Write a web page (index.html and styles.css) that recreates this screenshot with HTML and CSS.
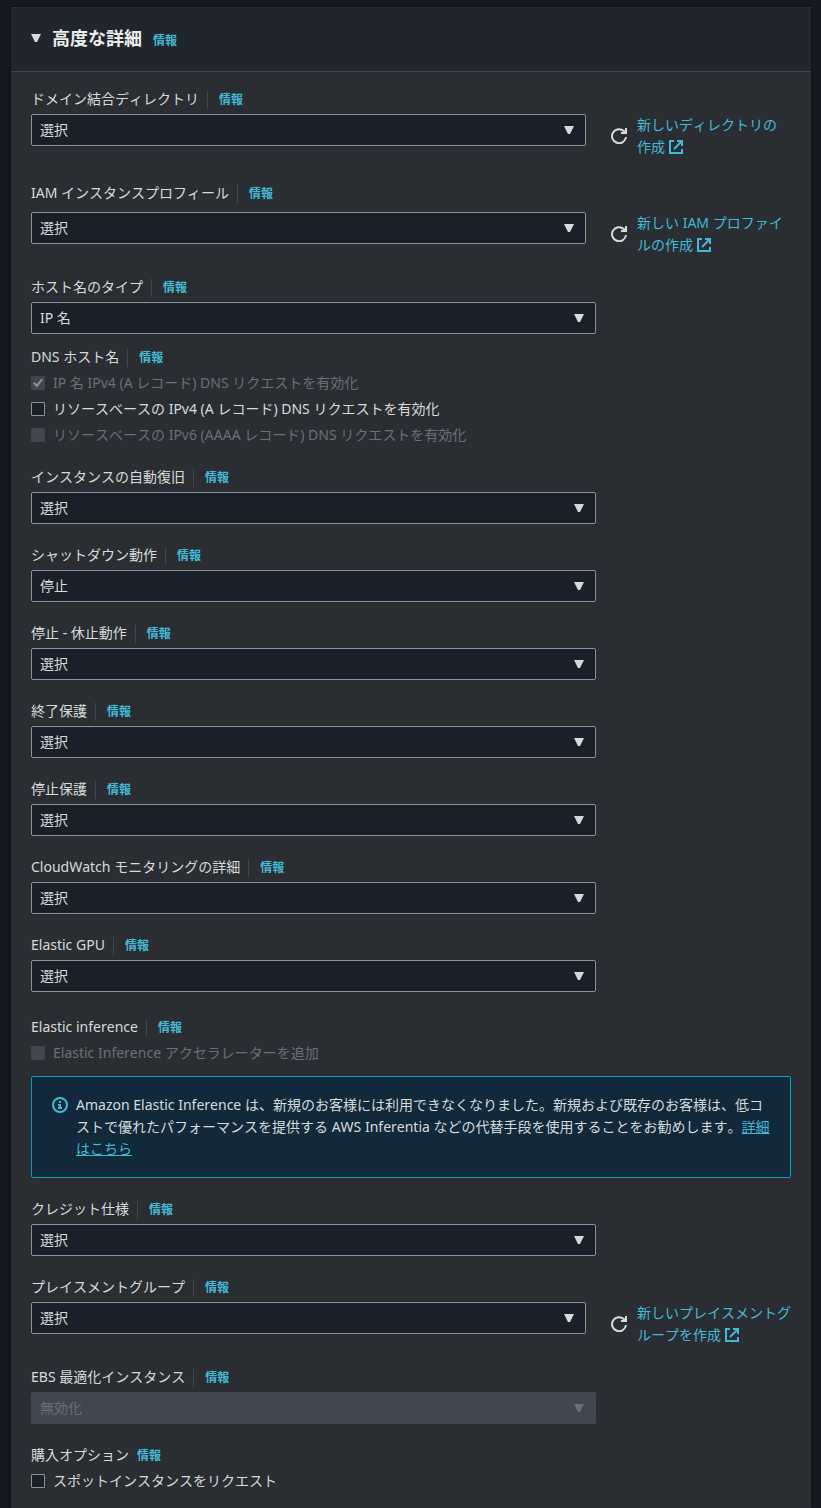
FILE: index.html
```html
<!DOCTYPE html>
<html lang="ja">

<head>
    <meta charset="UTF-8">
    <meta name="viewport" content="width=device-width, initial-scale=1.0">
    <title>高度な詳細</title>

    <link rel="stylesheet" href="styles.css">
</head>

<body>
    <!-- shared icons -->
    <svg class="sprite" aria-hidden="true">
        <symbol id="icon-refresh" viewBox="0 0 16 16">
            <path d="M15 9a7 7 0 1 1-2.200-6L15 5" />
            <path d="M15 0v5H10" />
        </symbol>
        <symbol id="icon-external" viewBox="0 0 14 14">
            <path d="M5 1H1v12h12V9" />
            <path d="M8 1h5v5M13 1 5 9" />
        </symbol>
        <symbol id="icon-info" viewBox="0 0 16 16">
            <circle cx="8" cy="8" r="7" />
            <path d="M8 4v2M6 8h2v3M6 11h4" />
        </symbol>
    </svg>

    <section class="panel">
        <header class="panel-header">
            <button type="button" class="toggle" aria-label="折りたたむ" aria-expanded="true"></button>
            <div class="title">
                <h2>高度な詳細</h2>
                <a href="#" class="info plain">情報</a>
            </div>
        </header>

        <form class="panel-body">
            <div class="field gap-large">
                <div class="label-row">
                    <label for="domain">ドメイン結合ディレクトリ</label>
                    <a href="#" class="info">情報</a>
                </div>
                <div class="control with-link">
                    <div class="select"><select id="domain"><option>選択</option></select></div>
                    <div class="side">
                        <button type="button" class="refresh" aria-label="更新"><svg><use href="#icon-refresh" /></svg></button>
                        <a href="#" class="create">新しいディレクトリの<span class="last">作成 <svg><use href="#icon-external" /></svg></span></a>
                    </div>
                </div>
            </div>

            <div class="field spaced">
                <div class="label-row">
                    <label for="iam">IAM インスタンスプロフィール</label>
                    <a href="#" class="info">情報</a>
                </div>
                <div class="control with-link">
                    <div class="select"><select id="iam"><option>選択</option></select></div>
                    <div class="side">
                        <button type="button" class="refresh" aria-label="更新"><svg><use href="#icon-refresh" /></svg></button>
                        <a href="#" class="create">新しい IAM プロファイルの<span class="last">作成 <svg><use href="#icon-external" /></svg></span></a>
                    </div>
                </div>
            </div>

            <div class="field gap-small">
                <div class="label-row">
                    <label for="hostname">ホスト名のタイプ</label>
                    <a href="#" class="info">情報</a>
                </div>
                <div class="control">
                    <div class="select"><select id="hostname"><option>IP 名</option></select></div>
                </div>
            </div>

            <div class="field" role="group" aria-labelledby="dns">
                <div class="label-row">
                    <span id="dns">DNS ホスト名</span>
                    <a href="#" class="info">情報</a>
                </div>
                <label class="check"><input type="checkbox" checked disabled><span>IP 名 IPv4 (A レコード) DNS リクエストを有効化</span></label>
                <label class="check"><input type="checkbox"><span>リソースベースの IPv4 (A レコード) DNS リクエストを有効化</span></label>
                <label class="check"><input type="checkbox" disabled><span>リソースベースの IPv6 (AAAA レコード) DNS リクエストを有効化</span></label>
            </div>

            <div class="field">
                <div class="label-row">
                    <label for="recovery">インスタンスの自動復旧</label>
                    <a href="#" class="info">情報</a>
                </div>
                <div class="control">
                    <div class="select"><select id="recovery"><option>選択</option></select></div>
                </div>
            </div>

            <div class="field">
                <div class="label-row">
                    <label for="shutdown">シャットダウン動作</label>
                    <a href="#" class="info">情報</a>
                </div>
                <div class="control">
                    <div class="select"><select id="shutdown"><option>停止</option></select></div>
                </div>
            </div>

            <div class="field">
                <div class="label-row">
                    <label for="hibernate">停止 - 休止動作</label>
                    <a href="#" class="info">情報</a>
                </div>
                <div class="control">
                    <div class="select"><select id="hibernate"><option>選択</option></select></div>
                </div>
            </div>

            <div class="field">
                <div class="label-row">
                    <label for="termination">終了保護</label>
                    <a href="#" class="info">情報</a>
                </div>
                <div class="control">
                    <div class="select"><select id="termination"><option>選択</option></select></div>
                </div>
            </div>

            <div class="field">
                <div class="label-row">
                    <label for="stop">停止保護</label>
                    <a href="#" class="info">情報</a>
                </div>
                <div class="control">
                    <div class="select"><select id="stop"><option>選択</option></select></div>
                </div>
            </div>

            <div class="field">
                <div class="label-row">
                    <label for="cloudwatch">CloudWatch モニタリングの詳細</label>
                    <a href="#" class="info">情報</a>
                </div>
                <div class="control">
                    <div class="select"><select id="cloudwatch"><option>選択</option></select></div>
                </div>
            </div>

            <div class="field gap-large">
                <div class="label-row">
                    <label for="gpu">Elastic GPU</label>
                    <a href="#" class="info">情報</a>
                </div>
                <div class="control">
                    <div class="select"><select id="gpu"><option>選択</option></select></div>
                </div>
            </div>

            <div class="field" role="group" aria-labelledby="inference">
                <div class="label-row">
                    <span id="inference">Elastic inference</span>
                    <a href="#" class="info">情報</a>
                </div>
                <label class="check"><input type="checkbox" disabled><span>Elastic Inference アクセラレーターを追加</span></label>
                <div class="alert">
                    <svg><use href="#icon-info" /></svg>
                    <p>Amazon Elastic Inference は、新規のお客様には利用できなくなりました。新規および既存のお客様は、低コストで優れたパフォーマンスを提供する AWS Inferentia などの代替手段を使用することをお勧めします。<a href="#">詳細はこちら</a></p>
                </div>
            </div>

            <div class="field">
                <div class="label-row">
                    <label for="credit">クレジット仕様</label>
                    <a href="#" class="info">情報</a>
                </div>
                <div class="control">
                    <div class="select"><select id="credit"><option>選択</option></select></div>
                </div>
            </div>

            <div class="field">
                <div class="label-row">
                    <label for="placement">プレイスメントグループ</label>
                    <a href="#" class="info">情報</a>
                </div>
                <div class="control with-link">
                    <div class="select"><select id="placement"><option>選択</option></select></div>
                    <div class="side">
                        <button type="button" class="refresh" aria-label="更新"><svg><use href="#icon-refresh" /></svg></button>
                        <a href="#" class="create">新しいプレイスメントグループを<span class="last">作成 <svg><use href="#icon-external" /></svg></span></a>
                    </div>
                </div>
            </div>

            <div class="field">
                <div class="label-row">
                    <label for="ebs">EBS 最適化インスタンス</label>
                    <a href="#" class="info">情報</a>
                </div>
                <div class="control">
                    <div class="select disabled"><select id="ebs" disabled><option>無効化</option></select></div>
                </div>
            </div>

            <div class="field" role="group" aria-labelledby="purchase">
                <div class="label-row">
                    <span id="purchase">購入オプション</span>
                    <a href="#" class="info plain">情報</a>
                </div>
                <label class="check"><input type="checkbox"><span>スポットインスタンスをリクエスト</span></label>
            </div>
        </form>
    </section>
</body>

</html>
```
FILE: styles.css
```css
* {
    box-sizing: border-box;
}

body {
    margin: 0;
    padding: 7px 10px 0 11px;
    background-color: #16191f;
    color: #d5dbdb;
    font-family: "Noto Sans", "Noto Sans CJK JP", sans-serif;
    font-size: 14px;
    font-kerning: none;
    line-height: 22px;
}

a {
    color: #44b9d6;
    text-decoration: none;
}

svg {
    fill: none;
    stroke: currentColor;
    stroke-width: 2;
}

.sprite {
    display: none;
}

/* panel */

.panel {
    background-color: #2a2e33;
    box-shadow: 0 0 2px rgba(0, 0, 0, 0.6);
}

.panel-header {
    display: flex;
    align-items: center;
    gap: 11px;
    padding: 16px 20px 19px;
    background-color: #21252c;
    border-top: 1px solid #2a2e33;
    border-bottom: 1px solid #414750;
}

.title {
    display: flex;
    align-items: baseline;
}

.title h2 {
    margin: 0 3px 0 0;
    color: #eaeded;
    font-size: 18px;
    line-height: 28px;
}

.toggle {
    width: 10px;
    height: 8px;
    padding: 0;
    border: none;
    background-color: #d5dbdb;
    clip-path: polygon(0 0, 100% 0, 60% 100%, 40% 100%);
}

.panel-body {
    padding: 16px 20px;
}

/* fields */

.field {
    margin-bottom: 20px;
}

.field:last-child {
    margin-bottom: 0;
}

.gap-small {
    margin-bottom: 12px;
}

.gap-large {
    margin-bottom: 24px;
}

.label-row {
    display: flex;
    align-items: baseline;
    height: 22px;
    margin-bottom: 4px;
}

.spaced .label-row {
    margin-bottom: 8px;
}

.info {
    margin-left: 8px;
    padding-left: 11px;
    border-left: 1px solid #414750;
    font-size: 12px;
    font-weight: bold;
    line-height: 18px;
}

.info.plain {
    padding-left: 0;
    border-left: none;
}

/* three of four columns, gutters included */
.control {
    display: grid;
    grid-template-columns: calc(75% - 5px) 1fr;
    column-gap: 20px;
}

.with-link {
    grid-template-columns: calc(75% - 15px) 1fr;
    column-gap: 25px;
}

.select {
    position: relative;
    height: 32px;
}

.select select {
    width: 100%;
    height: 32px;
    padding: 0 32px 0 8px;
    appearance: none;
    background-color: #1a2029;
    border: 1px solid #879596;
    border-radius: 2px;
    color: #d5dbdb;
    font: inherit;
}

.select::after {
    content: "";
    position: absolute;
    top: 12px;
    right: 12px;
    width: 10px;
    height: 8px;
    background-color: #d5dbdb;
    clip-path: polygon(0 0, 100% 0, 60% 100%, 40% 100%);
    pointer-events: none;
}

.select.disabled select {
    background-color: #414750;
    border-color: #414750;
    color: #687078;
    opacity: 1;
}

.select.disabled::after {
    background-color: #687078;
}

.side {
    display: flex;
    align-items: center;
    gap: 10px;
}

.refresh {
    flex: none;
    width: 16px;
    height: 16px;
    padding: 0;
    border: none;
    background: none;
    color: #d5dbdb;
}

.refresh svg {
    display: block;
    width: 16px;
    height: 16px;
}

.create .last {
    white-space: nowrap;
}

.create svg {
    width: 14px;
    height: 14px;
    vertical-align: -2px;
}

/* checkboxes */

.check {
    display: flex;
    align-items: center;
    margin-top: 4px;
}

.check input {
    display: grid;
    place-items: center;
    width: 14px;
    height: 14px;
    margin: 0 8px 0 0;
    appearance: none;
    background-color: #1a2029;
    border: 1px solid #879596;
    border-radius: 1px;
}

.check input:disabled {
    background-color: #414750;
    border-color: #414750;
}

.check input:checked::before {
    content: "";
    width: 10px;
    height: 9px;
    background-color: #879596;
    clip-path: polygon(0 55%, 15% 40%, 38% 65%, 85% 0, 100% 15%, 40% 100%);
}

.check input:disabled + span {
    color: #687078;
}

/* notice */

.alert {
    display: flex;
    gap: 8px;
    margin-top: 12px;
    padding: 17px 20px;
    background-color: #12293b;
    border: 1px solid #00a1c9;
    border-radius: 2px;
}

.alert svg {
    flex: none;
    width: 16px;
    height: 16px;
    margin-top: 3px;
    color: #44b9d6;
}

.alert p {
    margin: 0;
}

.alert a {
    text-decoration: underline;
}
```
